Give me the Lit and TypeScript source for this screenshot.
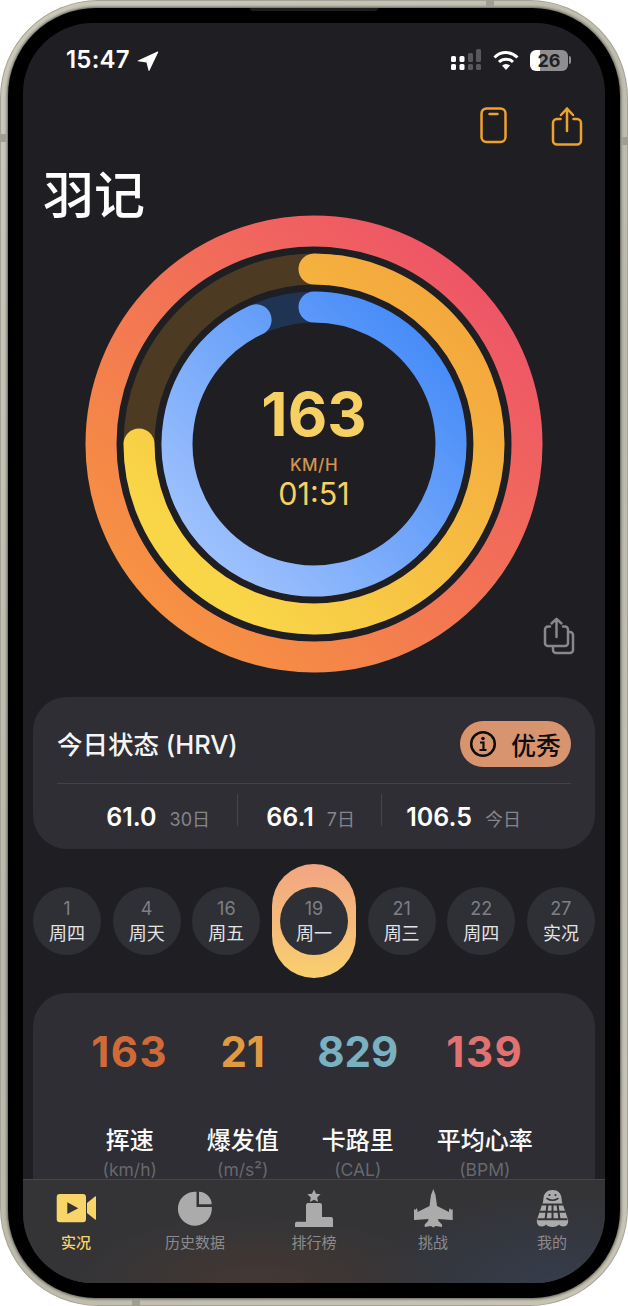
import { LitElement, html, css, svg } from "lit";
import { customElement } from "lit/decorators.js";

const days = [
  { n: "1", l: "周四" },
  { n: "4", l: "周天" },
  { n: "16", l: "周五" },
  { n: "19", l: "周一", on: true },
  { n: "21", l: "周三" },
  { n: "22", l: "周四" },
  { n: "27", l: "实况" },
];
const metrics = [
  { v: "163", c: "#d06b39", l: "挥速", u: "(km/h)", wide: true },
  { v: "21", c: "#e09a42", l: "爆发值", u: "(m/s²)" },
  { v: "829", c: "#79b1c1", l: "卡路里", u: "(CAL)" },
  { v: "139", c: "#e17271", l: "平均心率", u: "(BPM)", wide: true },
];

const polar = (r: number, deg: number) => {
  const a = ((deg - 90) * Math.PI) / 180;
  return `${229 + r * Math.cos(a)} ${229 + r * Math.sin(a)}`;
};
const arc = (r: number, deg: number) =>
  `M${polar(r, 0)} A${r} ${r} 0 1 1 ${polar(r, deg)}`;

const tabIcons = [
  svg`<path fill="currentColor" d="M3.7 6H27a3 3 0 0 1 3 3v22.3a3 3 0 0 1-3 3H3.7a3 3 0 0 1-3-3V9a3 3 0 0 1 3-3ZM31 15l8-6.6q1-.6 1 .6v22q0 1.2-1 .6L31 25Z"/><path fill="#343437" d="M11.3 14.3v11.8l11-5.8Z"/>`,
  svg`<path fill="currentColor" d="M21.5 3.8V19h15.3A17 17 0 1 1 21.5 3.8ZM24 3.7A13 13 0 0 1 36.7 16.3H24Z"/>`,
  svg`<path fill="currentColor" d="M20 1.500l2 4.200 4.600.6-3.400 3.200.9 4.500L20 11.800l-4.100 2.200.9-4.500-3.400-3.200 4.600-.6ZM1 39v-3.600q0-1.700 1.700-1.700H12V17q0-2 2-2h12q2 0 2 2v12h9q2 0 2 2v8Z"/>`,
  svg`<path fill="currentColor" d="M20.3 1l2.2 6 1 7 .5 4 12 6v-2l1-2 1 2 1.700-1v11h-1.200l-13.500-1 .5 2 3.500 3.500V39l-6.500-1-2.200 1.500-2.300-1.500-6.300 1v-2.500l3.300-3.500.5-2-13.500 1H1V21l1.500 1 1-2 1 2v2l12.100-6 .4-4 1-7Z"/>`,
  svg`<path fill="currentColor" d="M20.500 2c5.500 0 8.500 3.500 9 8l.5 4 6 17.500c.8 3.500-1 7-4.500 7-2.200 0-3.500-1-4.500-2-1 1.500-3.500 2.500-6.500 2.500s-5.500-1-6.500-2.500c-1 1-2.300 2-4.500 2-3.500 0-5.300-3.500-4.500-7l6-17.500.5-4c.5-4.500 3.500-8 9-8Z"/><path fill="none" stroke="#343437" stroke-width="2" d="M10 16.500h21M7.500 23.700h26M5.500 31.300h30M15.500 16.500l-2 15M20.500 16.500v15M25.500 16.500l2 15"/><path fill="none" stroke="#343437" stroke-width="1.500" stroke-linecap="round" d="M15 10.500q5.500 3.500 11 0"/><circle cx="17.500" cy="7" r="1.100" fill="#343437"/><circle cx="23.500" cy="7" r="1.100" fill="#343437"/>`,
];
const tabs = ["实况", "历史数据", "排行榜", "挑战", "我的"];

@customElement("app-root")
export class AppRoot extends LitElement {
  static styles = css`
    :host {
      display: block;
      width: 628px;
      height: 1306px;
      background: #fff;
      font-family: Inter, "Noto Sans CJK SC", sans-serif;
      overflow: hidden;
    }
    .device {
      position: relative;
      box-sizing: border-box;
      width: 628px;
      height: 1306px;
      padding: 1px;
      border-radius: 98px;
      background: #a5a396;
    }
    .metal {
      box-sizing: border-box;
      height: 100%;
      padding: 7px;
      border-radius: 97px;
      background: linear-gradient(135deg, #cdcabc, #bab8a9 50%, #c8c5b6);
    }
    .black {
      box-sizing: border-box;
      height: 100%;
      padding: 15px;
      border-radius: 88px;
      background: #000;
      box-shadow: 0 0 3px 1px #5c5b52;
    }
    .speaker {
      position: absolute;
      top: 8px;
      left: 250px;
      width: 128px;
      height: 3px;
      border-radius: 0 0 3px 3px;
      background: #1c1c1c;
    }
    .band {
      position: absolute;
      background: #a09e92;
    }
    .band.l { left: 0; top: 134px; width: 6px; height: 8px; }
    .band.r { right: 0; top: 137px; width: 6px; height: 8px; }
    .band.t { top: 0; left: 486px; width: 8px; height: 6px; }
    .band.b { bottom: 0; left: 132px; width: 8px; height: 6px; }
    .screen {
      position: relative;
      height: 100%;
      border-radius: 70px;
      overflow: hidden;
      background: #1f1f23;
    }
    .status {
      display: flex;
      align-items: center;
      height: 22px;
      margin-top: 26px;
      padding: 0 34px 0 43px;
      color: #fff;
      font-size: 24px;
      font-weight: 600;
      line-height: 22px;
    }
    .time {
      letter-spacing: 0.2px;
    }
    .arrow {
      margin-left: 7px;
    }
    .status-right {
      display: flex;
      align-items: center;
      gap: 11px;
      margin-left: auto;
    }
    .battery-wrap {
      display: flex;
      align-items: center;
      gap: 1px;
    }
    .battery {
      width: 38px;
      height: 21px;
      border-radius: 6px;
      background: linear-gradient(90deg, #fff 27%, #8e8e91 27%);
      color: #1f1f23;
      font-size: 18px;
      font-weight: 700;
      line-height: 21px;
      text-align: center;
    }
    .nub {
      width: 2px;
      height: 8px;
      border-radius: 0 2px 2px 0;
      background: #8e8e91;
    }
    .actions {
      display: flex;
      justify-content: flex-end;
      gap: 44px;
      height: 40px;
      margin-top: 36px;
      padding-right: 22px;
    }
    .title {
      margin: 19px 0 0 20px;
      color: #fff;
      font-size: 51px;
      font-weight: 500;
      line-height: 60px;
    }
    .rings {
      position: relative;
      width: 458px;
      height: 458px;
      margin: -11px 0 0 62px;
    }
    .rings svg {
      display: block;
    }
    .center {
      position: absolute;
      inset: 0;
      display: flex;
      flex-direction: column;
      align-items: center;
      color: #f6d062;
    }
    .big {
      margin-top: 164px;
      font-size: 61px;
      font-weight: 700;
      line-height: 70px;
    }
    .unit {
      margin-top: 6px;
      color: #d6944f;
      font-size: 17px;
      font-weight: 500;
      letter-spacing: 0.5px;
      line-height: 20px;
    }
    .clock {
      margin-top: 1px;
      font-size: 30.500px;
      font-weight: 400;
      line-height: 36px;
    }
    .copy {
      position: absolute;
      left: 458px;
      top: 402px;
    }
    .card {
      box-sizing: border-box;
      margin: 24px 10px 0;
      height: 152px;
      padding: 24px 24px 0;
      border-radius: 34px;
      background: #2e2e34;
    }
    .card-head {
      display: flex;
      align-items: center;
      justify-content: space-between;
      height: 46px;
    }
    .card-title {
      padding-bottom: 4px;
      color: #f4f4f4;
      font-size: 25.500px;
      font-weight: 500;
    }
    .badge {
      display: flex;
      align-items: center;
      gap: 14px;
      height: 46px;
      padding: 0 10px 0 9px;
      border-radius: 23px;
      background: #d8946f;
      color: #0d0d0d;
      font-size: 25px;
      font-weight: 500;
    }
    .line {
      height: 1px;
      margin-top: 16px;
      background: #4c3f3f;
    }
    .stats {
      display: flex;
      margin-top: 10px;
      height: 32px;
      align-items: center;
    }
    .stat {
      display: flex;
      align-items: baseline;
      justify-content: flex-end;
      gap: 13px;
      box-sizing: border-box;
      height: 32px;
      line-height: 46px;
      color: #fff;
      font-size: 25px;
      font-weight: 600;
    }
    .stat small {
      color: #85858a;
      font-size: 18px;
      font-weight: 400;
    }
    .s1 { width: 180px; padding-right: 27px; }
    .s2 { width: 143px; padding-right: 26px; }
    .s3 { width: 165px; padding-right: 26px; }
    .vline {
      width: 1px;
      height: 32px;
      background: #3f4a48;
    }
    .days {
      display: flex;
      align-items: center;
      justify-content: space-between;
      height: 114px;
      margin: 15px 10px 0;
    }
    .ring-pill {
      display: flex;
      align-items: center;
      justify-content: center;
      width: 84px;
      height: 114px;
      border-radius: 42px;
      background: linear-gradient(180deg, #f2a583, #f8d06e);
    }
    .day {
      display: flex;
      flex-direction: column;
      align-items: center;
      justify-content: center;
      width: 68px;
      height: 68px;
      border-radius: 50%;
      background: #2f2f36;
      color: #e4e4e4;
      font-size: 18px;
      line-height: 25px;
    }
    .day span {
      color: #7f7f85;
    }
    .metrics {
      display: flex;
      justify-content: center;
      gap: 38.500px;
      height: 300px;
      margin: 15px 10px 0;
      padding: 34px 4px 0 0;
      box-sizing: border-box;
      border-radius: 34px;
      background: #2e2e34;
    }
    .metric {
      display: flex;
      flex-direction: column;
      align-items: center;
    }
    .value {
      font-size: 42px;
      font-weight: 700;
      line-height: 50px;
    }
    .value.wide {
      letter-spacing: 1.500px;
    }
    .label {
      margin-top: 48px;
      color: #fafafa;
      font-size: 24px;
      font-weight: 500;
      line-height: 32px;
    }
    .sub {
      margin-top: 1px;
      color: #68686e;
      font-size: 17.500px;
      line-height: 24px;
    }
    .tabbar {
      position: absolute;
      left: 0;
      right: 0;
      bottom: 0;
      box-sizing: border-box;
      display: flex;
      justify-content: space-between;
      height: 104px;
      padding: 8px 33px 0;
      border-top: 1px solid #47474a;
      background:
        radial-gradient(ellipse 180px 70px at 235px 104px, #453833, transparent),
        radial-gradient(ellipse 190px 90px at 530px 104px, #353c4b, transparent),
        #343437;
    }
    .tab {
      display: flex;
      flex-direction: column;
      align-items: center;
      width: 40px;
      color: #ababab;
    }
    .tab.on {
      color: #f8d568;
    }
    .tab svg {
      display: block;
      flex: none;
    }
    .tab b {
      margin-top: 5px;
      color: #8b8b8e;
      font-size: 15px;
      font-weight: 400;
      line-height: 20px;
      white-space: nowrap;
    }
    .tab.on b {
      color: #f8d568;
      font-weight: 500;
    }
  `;

  render() {
    return html`
      <div class="device">
        <div class="metal">
          <div class="black">
            <div class="screen">
              <div class="status">
                <span class="time">15:47</span>
                <svg class="arrow" width="22" height="21" viewBox="0 0 22 21"><path fill="#fff" d="M1 10.500 20.500 1.500q1-.3.7.7L12.500 20.500q-.6 1-1 0L9.500 12.500 1 11.300q-.8-.3 0-.8Z"/></svg>
                <div class="status-right">
                  <svg width="31" height="22" viewBox="0 0 31 22">
                    <g fill="#fff"><rect x="0" y="7" width="5" height="6" rx="1.500"/><rect x="0" y="15" width="5" height="6" rx="1.500"/><rect x="8.500" y="7" width="5" height="6" rx="1.500"/><rect x="8.500" y="15" width="5" height="6" rx="1.500"/></g>
                    <g fill="#58585b"><rect x="17" y="4" width="5" height="9" rx="1.500"/><rect x="17" y="15" width="5" height="6" rx="1.500"/><rect x="25" y="0" width="5" height="13" rx="1.500"/><rect x="25" y="15" width="5" height="6" rx="1.500"/></g>
                  </svg>
                  <svg width="26" height="21" viewBox="0 0 26 21"><g fill="none" stroke="#fff" stroke-width="3"><path d="M1.500 7.500a16 16 0 0 1 23 0"/><path d="M6 12a10 10 0 0 1 14 0"/></g><path fill="#fff" d="M13 20l-4-4.500a6 6 0 0 1 8 0Z"/></svg>
                  <div class="battery-wrap"><div class="battery">26</div><div class="nub"></div></div>
                </div>
              </div>
              <div class="actions">
                <svg width="28" height="38" viewBox="0 0 28 38" fill="none" stroke="#f0a02e" stroke-width="2.500" stroke-linecap="round"><rect x="2.500" y="1.500" width="24" height="33.500" rx="5"/><path d="M10.500 7h8"/></svg>
                <svg width="32" height="40" viewBox="0 0 32 40" fill="none" stroke="#f0a02e" stroke-width="2.500" stroke-linecap="round" stroke-linejoin="round"><path d="M9.500 12H6a4 4 0 0 0-4 4v17.500a4 4 0 0 0 4 4h20a4 4 0 0 0 4-4V16a4 4 0 0 0-4-4h-3.500"/><path d="M16 24V1.500M10 8l6-6.500L22 8"/></svg>
              </div>
              <div class="title">羽记</div>
              <div class="rings">
                <svg width="458" height="458" viewBox="0 0 458 458" fill="none">
                  <defs>
                    <linearGradient id="gOuter" gradientUnits="userSpaceOnUse" x1="400" y1="60" x2="50" y2="420"><stop offset="0" stop-color="#ee5468"/><stop offset="1" stop-color="#f7963f"/></linearGradient>
                    <linearGradient id="gMid" gradientUnits="userSpaceOnUse" x1="360" y1="110" x2="110" y2="350"><stop offset="0" stop-color="#f4a93d"/><stop offset="1" stop-color="#f9d648"/></linearGradient>
                    <linearGradient id="gIn" gradientUnits="userSpaceOnUse" x1="360" y1="120" x2="110" y2="350"><stop offset="0" stop-color="#4289f8"/><stop offset="1" stop-color="#a3c4fd"/></linearGradient>
                  </defs>
                  <circle cx="229" cy="229" r="213" stroke="url(#gOuter)" stroke-width="31"/>
                  <circle cx="229" cy="229" r="175" stroke="#4c3a23" stroke-width="31"/>
                  <path d="${arc(175, 270)}" stroke="url(#gMid)" stroke-width="31" stroke-linecap="round"/>
                  <circle cx="229" cy="229" r="137" stroke="#1f3352" stroke-width="31"/>
                  <path d="${arc(137, 335)}" stroke="url(#gIn)" stroke-width="31" stroke-linecap="round"/>
                </svg>
                <div class="center">
                  <div class="big">163</div>
                  <div class="unit">KM/H</div>
                  <div class="clock">01:51</div>
                </div>
                <svg class="copy" width="32" height="38" viewBox="0 0 32 38" fill="none" stroke="#88888c" stroke-width="2.500" stroke-linecap="round" stroke-linejoin="round"><path d="M7 9.500H5a3 3 0 0 0-3 3V26a3 3 0 0 0 3 3h17a3 3 0 0 0 3-3V12.500a3 3 0 0 0-3-3h-2"/><path d="M13.500 20V2M8.500 6.500 13.500 1.800l5 4.700"/><path d="M25.500 15H27a3 3 0 0 1 3 3v15a3 3 0 0 1-3 3H13a3 3 0 0 1-3-3v-3.500"/></svg>
              </div>
              <div class="card">
                <div class="card-head">
                  <div class="card-title">今日状态 (HRV)</div>
                  <div class="badge">
                    <svg width="28" height="28" viewBox="0 0 28 28" fill="none"><circle cx="14" cy="14" r="11.800" stroke="#0d0d0d" stroke-width="2.500"/><circle cx="14" cy="8.500" r="1.800" fill="#0d0d0d"/><path d="M11 12.500h3.500V19M10.500 20h7" stroke="#0d0d0d" stroke-width="2.200"/></svg>
                    <span>优秀</span>
                  </div>
                </div>
                <div class="line"></div>
                <div class="stats">
                  <div class="stat s1">61.0<small>30日</small></div>
                  <div class="vline"></div>
                  <div class="stat s2">66.1<small>7日</small></div>
                  <div class="vline"></div>
                  <div class="stat s3">106.5<small>今日</small></div>
                </div>
              </div>
              <div class="days">
                ${days.map((d) => {
                  const item = html`<div class="day"><span>${d.n}</span>${d.l}</div>`;
                  return d.on ? html`<div class="ring-pill">${item}</div>` : item;
                })}
              </div>
              <div class="metrics">
                ${metrics.map(
                  (m) => html`<div class="metric">
                    <div class="value ${m.wide ? "wide" : ""}" style="color:${m.c}">${m.v}</div>
                    <div class="label">${m.l}</div>
                    <div class="sub">${m.u}</div>
                  </div>`
                )}
              </div>
              <div class="tabbar">
                ${tabs.map(
                  (t, i) => html`<div class="tab ${i === 0 ? "on" : ""}">
                    <svg width="40" height="40" viewBox="0 0 40 40">${tabIcons[i]}</svg>
                    <b>${t}</b>
                  </div>`
                )}
              </div>
            </div>
          </div>
        </div>
        <div class="speaker"></div>
        <div class="band l"></div>
        <div class="band r"></div>
        <div class="band t"></div>
        <div class="band b"></div>
      </div>
    `;
  }
}
